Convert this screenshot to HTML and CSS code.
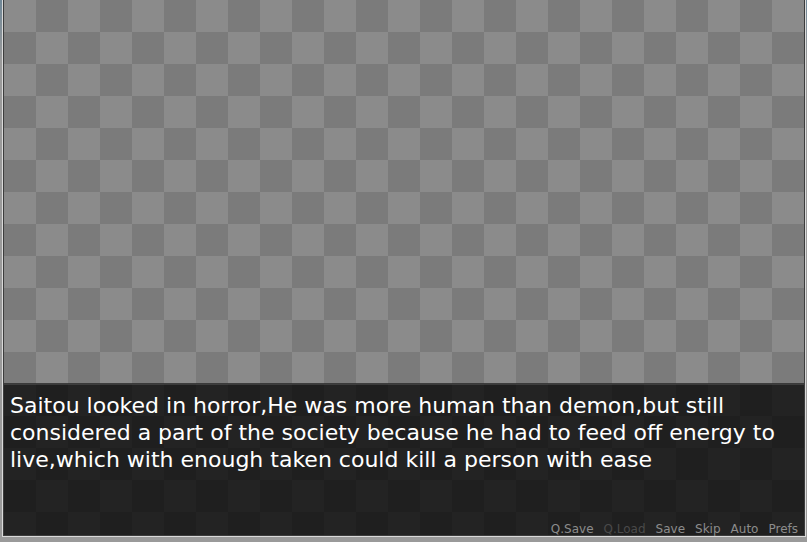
FILE: index.html
```html
<!DOCTYPE html>
<html lang="en">
<head>
    <meta charset="UTF-8">
    <title>Saitou</title>
    <link rel="stylesheet" href="styles.css">
</head>
<body>
    <div class="frame">
        <div class="game">
            <!-- empty scene, transparent background -->
            <div class="scene"></div>

            <!-- say window -->
            <div class="textbox">
                <p class="say">Saitou looked in horror,He was more human than demon,but still considered a part of the society because he had to feed off energy to live,which with enough taken could kill a person with ease</p>

                <div class="quick-menu">
                    <span class="qm">Q.Save</span>
                    <span class="qm off">Q.Load</span>
                    <span class="qm">Save</span>
                    <span class="qm">Skip</span>
                    <span class="qm">Auto</span>
                    <span class="qm">Prefs</span>
                </div>
            </div>
        </div>
    </div>
</body>
</html>
```

FILE: styles.css
```css
body {
    margin: 0;
    background: linear-gradient(to bottom, #6f8797 0, #9a9a9a 60px, #9a9a9a 100%);
    font-family: "DejaVu Sans", sans-serif;
    height: 542px;
    overflow: hidden;
}

.frame {
    width: 802px;
    margin-left: 2px;
    border: 1px solid #dadada;
    border-top: none;
    background: #9a9a9a;
}

.game {
    width: 800px;
    height: 535px;
    border: 1px solid #3c3c3c;
    border-top: none;
    display: flex;
    flex-direction: column;
    background: repeating-conic-gradient(#7b7b7b 0 25%, #8b8b8b 0 50%) 0 0 / 64px 64px;
}

.scene {
    flex: 1;
}

.textbox {
    height: 150px;
    border-top: 2px solid rgba(255, 255, 255, 0.12);
    background-color: rgba(0, 0, 0, 0.75);
    display: flex;
    flex-direction: column;
}

.say {
    margin: 0;
    padding: 7px 6px 0 6px;
    color: #ffffff;
    font-size: 22px;
    line-height: 27px;
}

.quick-menu {
    margin-top: auto;
    display: flex;
    justify-content: flex-end;
    gap: 10px;
    padding: 0 6px 0 0;
    margin-bottom: -1px;
}

.qm {
    color: #8c8c8c;
    font-size: 12px;
    line-height: 14px;
}

.qm.off {
    color: #4a4a4a;
}
```
